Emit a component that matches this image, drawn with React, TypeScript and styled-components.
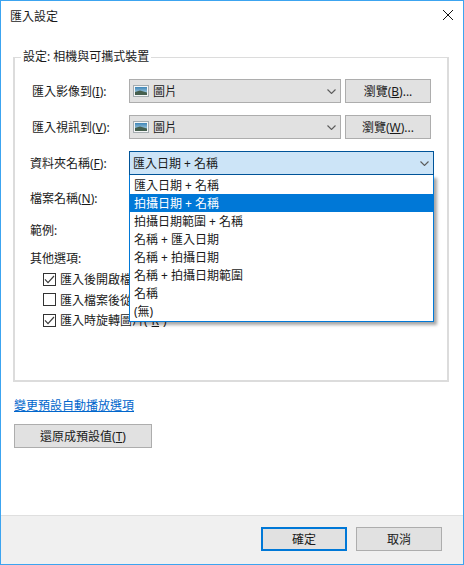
import React from 'react'
import styled, { createGlobalStyle } from 'styled-components'

const folderOptions = [
    '匯入日期 + 名稱',
    '拍攝日期 + 名稱',
    '拍攝日期範圍 + 名稱',
    '名稱 + 匯入日期',
    '名稱 + 拍攝日期',
    '名稱 + 拍攝日期範圍',
    '名稱',
    '(無)',
]

const Chevron = () => (
    <svg width="9" height="5" viewBox="0 0 9 5" fill="none">
        <path d="M0.5 0.5 L4.5 4.5 L8.5 0.5" stroke="#5c5c5c" strokeWidth="1.1" />
    </svg>
)

const PictureIcon = () => (
    <svg width="16" height="12" viewBox="0 0 16 12">
        <defs>
            <linearGradient id="sky" x1="0" y1="0" x2="0" y2="1">
                <stop offset="0" stopColor="#3f86b8" />
                <stop offset="1" stopColor="#c4dfe8" />
            </linearGradient>
        </defs>
        <rect x="0.5" y="0.5" width="15" height="11" fill="#f4f6f7" stroke="#a4acb0" />
        <rect x="2" y="2" width="12" height="8" fill="url(#sky)" />
        <path d="M2 7 L7 5.6 L14 7.4 V10 H2 Z" fill="#46604f" />
    </svg>
)

const Check = () => (
    <svg width="11" height="9" viewBox="0 0 11 9" fill="none">
        <path d="M1 4.4 L4 7.6 L10 1" stroke="#3c3c3c" strokeWidth="1.2" />
    </svg>
)

export default function App() {
    return (
        <>
            <GlobalStyle />
            <Window>
                <TitleBar>
                    <Title>匯入設定</Title>
                    <CloseIcon width="10" height="10" viewBox="0 0 10 10">
                        <path d="M0 0 L10 10 M10 0 L0 10" stroke="#111" strokeWidth="1" />
                    </CloseIcon>
                </TitleBar>
                <Content>
                    <Group>
                        <Legend>設定: 相機與可攜式裝置</Legend>
                        <Row>
                            <Label $indent={2}>
                                匯入影像到(<u>I</u>):
                            </Label>
                            <Combo>
                                <ComboValue>
                                    <PictureIcon />
                                    圖片
                                </ComboValue>
                                <Chevron />
                            </Combo>
                            <BrowseButton>
                                瀏覽(<u>B</u>)...
                            </BrowseButton>
                        </Row>
                        <Row>
                            <Label $indent={2}>
                                匯入視訊到(<u>V</u>):
                            </Label>
                            <Combo>
                                <ComboValue>
                                    <PictureIcon />
                                    圖片
                                </ComboValue>
                                <Chevron />
                            </Combo>
                            <BrowseButton>
                                瀏覽(<u>W</u>)...
                            </BrowseButton>
                        </Row>
                        <Row>
                            <Label>
                                資料夾名稱(<u>F</u>):
                            </Label>
                            <OpenCombo>
                                <FocusedCombo>
                                    <span>匯入日期 + 名稱</span>
                                    <Chevron />
                                </FocusedCombo>
                                <Popup>
                                    {folderOptions.map((option, i) => (
                                        <PopupItem key={option} $selected={i === 1}>
                                            {option}
                                        </PopupItem>
                                    ))}
                                </Popup>
                            </OpenCombo>
                        </Row>
                        <PlainRow $height={22}>
                            <Label>
                                檔案名稱(<u>N</u>):
                            </Label>
                        </PlainRow>
                        <PlainRow $height={42}>
                            <Label>範例:</Label>
                        </PlainRow>
                        <PlainRow $height={14}>
                            <Label>其他選項:</Label>
                        </PlainRow>
                        <Options>
                            <OptionRow>
                                <CheckBox>
                                    <Check />
                                </CheckBox>
                                匯入後開啟檔案總管(<u>O</u>)
                            </OptionRow>
                            <OptionRow>
                                <CheckBox />
                                匯入檔案後從裝置中刪除(<u>D</u>)
                            </OptionRow>
                            <OptionRow>
                                <CheckBox>
                                    <Check />
                                </CheckBox>
                                匯入時旋轉圖片(<u>R</u>)
                            </OptionRow>
                        </Options>
                    </Group>
                    <LinkText href="#">變更預設自動播放選項</LinkText>
                    <ResetButton>
                        還原成預設值(<u>T</u>)
                    </ResetButton>
                </Content>
                <Footer>
                    <DefaultButton>確定</DefaultButton>
                    <FooterButton>取消</FooterButton>
                </Footer>
            </Window>
        </>
    )
}

const GlobalStyle = createGlobalStyle`
    html, body {
        margin: 0;
        padding: 0;
        background: #fff;
    }
    body {
        font-family: "Noto Sans", "Noto Sans CJK TC", sans-serif;
        font-size: 12px;
        color: #1a1a1a;
    }
`

const Window = styled.div`
    box-sizing: border-box;
    width: 464px;
    height: 565px;
    border: 1px solid #3ca4f0;
    display: flex;
    flex-direction: column;
    background: #fff;
    overflow: hidden;
`

const TitleBar = styled.div`
    height: 30px;
    display: flex;
    align-items: center;
    justify-content: space-between;
    padding: 0 10px 0 9px;
    flex: none;
`

const Title = styled.span`
    font-size: 12px;
`

const CloseIcon = styled.svg`
    display: block;
    margin-bottom: 2px;
`

const Content = styled.div`
    flex: 1;
    padding: 17px 15px 0 12px;
    display: flex;
    flex-direction: column;
    align-items: flex-start;
`

const Group = styled.fieldset`
    box-sizing: border-box;
    width: 436px;
    height: 334px;
    margin: 0;
    padding: 13px 0 0 15px;
    border: 2px solid #dcdcdc;
    border-width: 1px 2px 2px 2px;
    display: block;
`

const Legend = styled.legend`
    margin-left: -9px;
    padding: 0 2px 0 2px;
    line-height: 18px;
`

const Row = styled.div`
    display: flex;
    align-items: center;
    height: 24px;
    margin-bottom: 12px;
`

const PlainRow = styled.div<{ $height: number }>`
    display: flex;
    align-items: center;
    height: ${(p) => p.$height}px;
`

const Label = styled.label<{ $indent?: number }>`
    box-sizing: border-box;
    width: 99px;
    flex: none;
    padding-left: ${(p) => p.$indent ?? 0}px;
    white-space: nowrap;
`

const Combo = styled.div`
    box-sizing: border-box;
    width: 212px;
    height: 24px;
    flex: none;
    background: #e1e1e1;
    border: 1px solid #adadad;
    display: flex;
    align-items: center;
    justify-content: space-between;
    padding: 0 4px 0 3px;
`

const ComboValue = styled.span`
    display: flex;
    align-items: center;
    gap: 4px;
`

const OpenCombo = styled.div`
    position: relative;
    width: 305px;
    flex: none;
`

const FocusedCombo = styled(Combo)`
    width: 100%;
    background: #cce4f7;
    border-color: #005499;
`

const Popup = styled.ul`
    position: absolute;
    top: 24px;
    left: 0;
    right: 0;
    z-index: 2;
    margin: 0;
    padding: 1px 0 0;
    list-style: none;
    background: #fff;
    border: 1px solid #0078d7;
    border-top: none;
    height: 147px;
    box-sizing: border-box;
    box-shadow: 3px 3px 3px rgba(0, 0, 0, 0.35);
`

const PopupItem = styled.li<{ $selected?: boolean }>`
    height: 18px;
    line-height: 19px;
    padding-left: 4px;
    background: ${(p) => (p.$selected ? '#0078d7' : 'transparent')};
    color: ${(p) => (p.$selected ? '#fff' : '#1a1a1a')};
`

const Button = styled.button`
    box-sizing: border-box;
    background: #e1e1e1;
    border: 1px solid #adadad;
    border-radius: 0;
    padding: 0;
    margin: 0;
    font: inherit;
    color: #1a1a1a;
    height: 24px;
`

const BrowseButton = styled(Button)`
    width: 86px;
    margin-left: 4px;
`

const Options = styled.div`
    display: flex;
    flex-direction: column;
    padding: 4px 0 0 13px;
`

const OptionRow = styled.div`
    display: flex;
    align-items: center;
    gap: 4px;
    height: 20.5px;
    white-space: nowrap;
`

const CheckBox = styled.span`
    box-sizing: border-box;
    width: 13px;
    height: 13px;
    flex: none;
    border: 1px solid #333;
    background: #fff;
    display: flex;
    align-items: center;
    justify-content: center;
`

const LinkText = styled.a`
    margin: 14px 0 0 1px;
    line-height: 20px;
    color: #0066cc;
    text-decoration: underline;
`

const ResetButton = styled(Button)`
    width: 138px;
    margin: 8px 0 0 1px;
`

const Footer = styled.div`
    box-sizing: border-box;
    height: 49px;
    flex: none;
    background: #f0f0f0;
    border-top: 1px solid #dfdfdf;
    display: flex;
    justify-content: flex-end;
    gap: 9px;
    padding: 11px 21px 0 0;
`

const FooterButton = styled(Button)`
    width: 86px;
`

const DefaultButton = styled(FooterButton)`
    border: 2px solid #0078d7;
`
